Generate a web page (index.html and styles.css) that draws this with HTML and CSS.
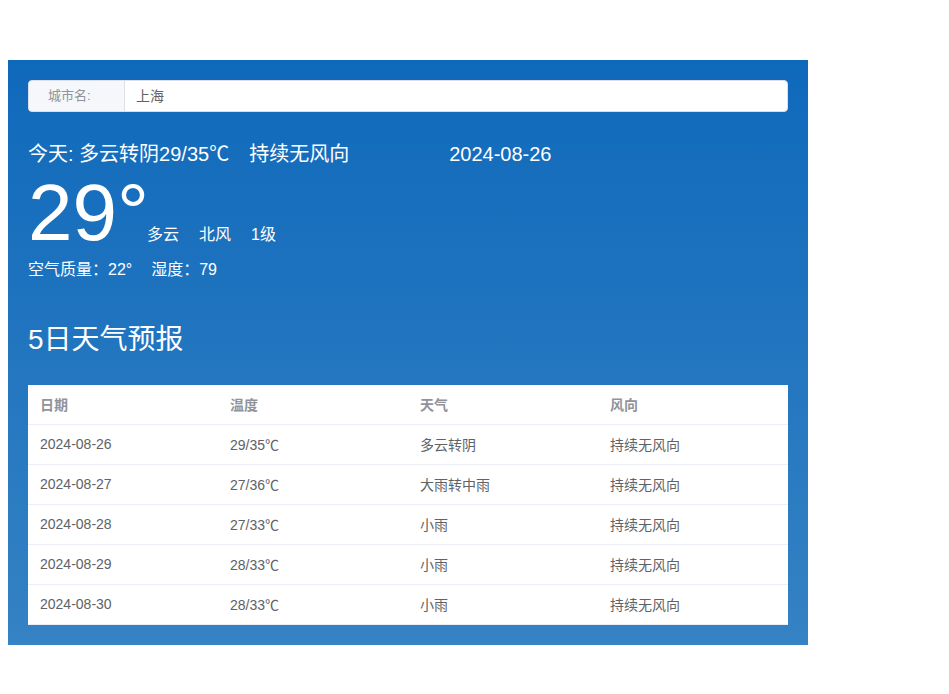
FILE: index.html
```html
<!DOCTYPE html>
<html lang="zh-CN">
<head>
<meta charset="utf-8">
<link rel="stylesheet" href="styles.css">
</head>
<body>
<div class="spacer"></div>
<div class="weather">
  <div class="input-group">
    <div class="prepend">城市名:</div>
    <div class="input">上海</div>
  </div>
  <div class="today">
    <span>今天: 多云转阴29/35℃</span><span class="wind">持续无风向</span><span class="date">2024-08-26</span>
  </div>
  <div class="now">
    <span class="temp">29°</span>
    <span class="desc">多云</span><span class="desc">北风</span><span class="desc">1级</span>
  </div>
  <div class="air"><span>空气质量：22°</span><span class="hum">湿度：79</span></div>
  <h2 class="title">5日天气预报</h2>
  <table class="table">
    <thead>
      <tr><th>日期</th><th>温度</th><th>天气</th><th>风向</th></tr>
    </thead>
    <tbody>
      <tr><td>2024-08-26</td><td>29/35℃</td><td>多云转阴</td><td>持续无风向</td></tr>
      <tr><td>2024-08-27</td><td>27/36℃</td><td>大雨转中雨</td><td>持续无风向</td></tr>
      <tr><td>2024-08-28</td><td>27/33℃</td><td>小雨</td><td>持续无风向</td></tr>
      <tr><td>2024-08-29</td><td>28/33℃</td><td>小雨</td><td>持续无风向</td></tr>
      <tr><td>2024-08-30</td><td>28/33℃</td><td>小雨</td><td>持续无风向</td></tr>
    </tbody>
  </table>
</div>
</body>
</html>
```
FILE: styles.css
```css
body {
  margin: 8px;
  font-family: "Liberation Sans", Arial, "Noto Sans CJK SC", sans-serif;
  background: #fff;
}
.spacer { height: 52px; }
.weather {
  width: 800px;
  box-sizing: border-box;
  padding: 20px 20px 20px;
  background: linear-gradient(180deg, #0f69bb 0%, #3582c4 100%);
  color: #fff;
}
.input-group {
  display: flex;
  height: 32px;
  border: 1px solid #dcdfe6;
  border-radius: 4px;
  box-sizing: border-box;
  background: #fff;
  overflow: hidden;
}
.prepend {
  width: 96px;
  box-sizing: border-box;
  background: #f5f7fa;
  color: #909399;
  font-size: 13px;
  line-height: 30px;
  padding-left: 19px;
  border-right: 1px solid #dcdfe6;
}
.input {
  flex: 1;
  color: #606266;
  font-size: 14px;
  line-height: 30px;
  padding-left: 11px;
}
.today {
  margin-top: 30px;
  font-size: 20px;
  line-height: 24px;
}
.today .wind { margin-left: 20px; }
.today .date { margin-left: 100px; }
.now {
  display: flex;
  align-items: baseline;
  margin-top: 8px;
  height: 78px;
}
.temp {
  font-size: 80px;
  line-height: 78px;
  margin-right: -2px;
}
.desc {
  font-size: 16px;
  margin-right: 20px;
}
.air {
  margin-top: 7px;
  font-size: 16px;
  line-height: 22px;
}
.air .hum { margin-left: 19px; }
.title {
  margin: 40px 0 0;
  font-size: 28px;
  font-weight: normal;
  line-height: 38px;
}
.table {
  margin-top: 26px;
  width: 760px;
  border-collapse: separate;
  border-spacing: 0;
  table-layout: fixed;
  background: #fff;
  font-size: 14px;
}
.table th, .table td {
  height: 40px;
  box-sizing: border-box;
  padding: 0 12px 2px;
  text-align: left;
  border-bottom: 1px solid #ebeef5;
}
.table th {
  color: #909399;
  font-weight: bold;
}
.table td { color: #606266; }
```
